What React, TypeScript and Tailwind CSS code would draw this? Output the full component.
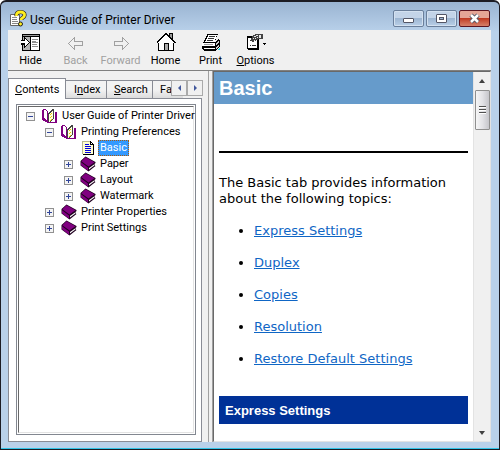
import type { ReactNode } from "react";

function HelpLogo() {
  return (
    <svg width="18" height="17" viewBox="0 0 18 17" aria-hidden="true">
      <path d="M1.500 4.500h9v11h-9z" fill="#fff" stroke="#666" />
      <path d="M3 7.500h5M3 9.500h5M3 11.500h6M3 13.500h6" stroke="#888" />
      <path d="M7.500 6C7 3 9 2 11.500 2s4.500 1 4 3.500-3.500 2.500-3.500 4.500" fill="none" stroke="#222" strokeWidth="4" />
      <path d="M7.500 6C7 3 9 2 11.500 2s4.500 1 4 3.500-3.500 2.500-3.500 4.500" fill="none" stroke="#ffee20" strokeWidth="2.800" />
      <circle cx="11.500" cy="14" r="2" fill="#ffee20" stroke="#222" />
    </svg>
  );
}

function HideIcon() {
  return (
    <svg width="21" height="20" viewBox="0 0 21 20" shapeRendering="crispEdges" aria-hidden="true">
      <path d="M2 1h18v18H2z" fill="#000" />
      <path d="M3 4h7v14H3z" fill="#b4b4b4" />
      <path d="M11 4h8v14h-8z" fill="#fff" />
      <path d="M3 2h16v1H3z" fill="#999" />
      <path d="M12 6.500h6M12 8.500h4M12 10.500h6M12 12.500h5M12 14.500h6" stroke="#888" />
      <path d="M0 7h4V4h1v1h1v1h1v1h1v1h1v1h1v2H9v1H8v1H7v1H6v1H5v1H4v-3H0z" fill="#000" />
      <path d="M1 8h4V6h1v1h1v1h1v1h1v2H8v1H7v1H6v1H5v-3H1z" fill="#fff" />
    </svg>
  );
}

function ArrowIcon({ flip }: { flip?: boolean }) {
  return (
    <svg width="20" height="20" viewBox="0 0 20 20" className={flip ? "-scale-x-100" : ""} shapeRendering="crispEdges" aria-hidden="true">
      <path
        fill="#a0a0a0"
        d="M8 4h1v4h8v6H9v4H8v-1H7v-1H6v-1H5v-1H4v-1H3v-1H2v-2h1V9h1V8h1V7h1V6h1V5h1z"
      />
      <path
        fill="#f0f0f0"
        d="M7 6h1v3h8v4H8v3H7v-1H6v-1H5v-1H4v-1H3v-2h1V9h1V8h1V7h1z"
      />
    </svg>
  );
}

function HomeIcon() {
  return (
    <svg width="20" height="20" viewBox="0 0 20 20" shapeRendering="crispEdges" aria-hidden="true">
      <path d="M13 0h4v8h-4z" fill="#000" />
      <path d="M14 1h2v7h-2z" fill="#999" />
      <path
        fill="#000"
        d="M9 0h2v1h1v1h1v1h1v1h1v1h1v1h1v1h1v1h1v1h1v2h-2v8H2v-8H0V9h1V8h1V7h1V6h1V5h1V4h1V3h1V2h1V1h1z"
      />
      <path
        fill="#fff"
        d="M9 2h2v1h1v1h1v1h1v1h1v1h1v1h1v1h1v1h-1v8H3v-8H2V9h1V8h1V7h1V6h1V5h1V4h1V3h1z"
      />
      <path d="M8 11h5v7H8z" fill="#000" />
      <path d="M9 12h3v6H9z" fill="#aaa" />
    </svg>
  );
}

function PrintIcon() {
  return (
    <svg width="22" height="20" viewBox="0 0 22 20" shapeRendering="crispEdges" aria-hidden="true">
      <path d="M7 1h11v1h-1v2h-1v3h-1v3H3V9h1V7h1V5h1V3h1z" fill="#000" />
      <path d="M8 2h9v1h-1v3h-1v3H5V8h1V6h1V4h1z" fill="#fff" />
      <path d="M9 3h6v1H9zM8 5h6v1H8zM7 7h6v1H7z" fill="#333" />
      <path d="M1 10h2V9h13V8h1V7h1V6h1v1h1v8h-1v1h-1v1h-1v1h-1v1H4v-1H3v-1H1z" fill="#000" />
      <path d="M3 10h12v1H3zM2 11h13v3H2zM4 16h11v1H4z" fill="#fff" />
      <path d="M4 12h9v1H4z" fill="#999" />
      <path d="M17 9h1V8h1v3h-1v1h-1v1h-1v-3h1zM16 15h1v-1h1v-1h1v2h-1v1h-1v1h-1z" fill="#ccc" />
      <path d="M18 17h2v1h-2zM19 16h1v1h-1z" fill="#20cfd8" />
    </svg>
  );
}

function OptionsIcon() {
  return (
    <svg width="24" height="20" viewBox="0 0 24 20" shapeRendering="crispEdges" aria-hidden="true">
      <path d="M2 3h13v15H4v-1H2z" fill="#000" />
      <path d="M4 5h9v11H4z" fill="#fff" />
      <path d="M6 7h1v1H6zM8 7h4v1H8zM6 10h1v1H6zM8 10h4v1H8zM6 13h1v1H6zM8 13h4v1H8z" fill="#333" />
      <path d="M8 3h1V2h2V1h8v5h-5v1h-2v1h-2v1H8V8H7V5h1z" fill="#444" />
      <path d="M10 3h2v1h-2zM12 2h2v1h-2zM9 5h1v1H9zM11 5h1v1h-1zM13 4h1v1h-1zM15 2h2v3h-2zM10 7h1v1h-1z" fill="#e8e8e8" />
      <path d="M18 10h5v1h-1v1h-1v1h-1v-1h-1v-1h-1z" fill="#000" />
    </svg>
  );
}

function OpenBook() {
  return (
    <svg width="16" height="16" viewBox="0 0 16 16" shapeRendering="crispEdges" aria-hidden="true">
      <path d="M0 2h1v9l5 3h7V4h2v11H6l-6-3z" fill="#800080" />
      <path d="M1 1h2l3 3v10l-5-3z" fill="#800080" />
      <path d="M2 2h1l2 2v8l-3-2z" fill="#fff" />
      <path d="M6 5l4-4h2v10l-4 3H6z" fill="#444" />
      <path d="M7 6l4-4v9l-4 3z" fill="#ffffe0" />
      <path d="M8 6h1v1H8zM9 5h1v1H9zM8 9h1v1H8zM9 8h1v1H9zM8 12h1v1H8zM9 11h1v1H9z" fill="#e4cc00" />
      <path d="M12 3h1v9l-4 2V13l3-2z" fill="#fff" />
    </svg>
  );
}

function ClosedBook() {
  return (
    <svg width="16" height="16" viewBox="0 0 16 16" aria-hidden="true">
      <path d="M5.500 .5L15.500 6v1l-1 1v1.500l1 .5-7 5.500L.5 9.500V5z" fill="#200020" />
      <path d="M5.500 1.200L14.500 6.300 8.500 10.500 1.300 5.200z" fill="#800080" />
      <path d="M1 6.200l7 5.300v3.200L1 9.200z" fill="#800080" />
      <path d="M9 12l5-3.500v1.300l-5 3.700z" fill="#fff" />
    </svg>
  );
}

function PageIcon() {
  return (
    <svg width="16" height="16" viewBox="0 0 16 16" shapeRendering="crispEdges" aria-hidden="true">
      <path d="M3 1h8v1h1v1h1v1h1v11H3z" fill="#000" />
      <path d="M2 1h8v4h3v9H2z" fill="#b8b890" />
      <path d="M3 2h7v3h3v9H3z" fill="#ffffd0" />
      <path d="M11 3h1v1h-1z" fill="#fff" />
      <path d="M5 4h4v1H5zM5 6h6v1H5zM5 8h6v1H5zM5 10h6v1H5zM5 12h6v1H5z" fill="#0000e0" />
    </svg>
  );
}

function Expander({ open, label }: { open?: boolean; label: string }) {
  return (
    <button aria-label={(open ? "Collapse " : "Expand ") + label} className="size-[9px] shrink-0 border border-[#919191] bg-[#f4f4f4]">
      <svg width="7" height="7" viewBox="0 0 7 7" shapeRendering="crispEdges" className="block" aria-hidden="true">
        <path d={open ? "M1 3h5v1H1z" : "M1 3h5v1H1zM3 1h1v5H3z"} fill="#31469a" />
      </svg>
    </button>
  );
}

type Node = { text: string; level: 0 | 1 | 2; kind: "open" | "closed" | "page" };

const nodes: Node[] = [
  { text: "User Guide of Printer Driver", level: 0, kind: "open" },
  { text: "Printing Preferences", level: 1, kind: "open" },
  { text: "Basic", level: 2, kind: "page" },
  { text: "Paper", level: 2, kind: "closed" },
  { text: "Layout", level: 2, kind: "closed" },
  { text: "Watermark", level: 2, kind: "closed" },
  { text: "Printer Properties", level: 1, kind: "closed" },
  { text: "Print Settings", level: 1, kind: "closed" },
];

const indents = ["pl-[7px]", "pl-[26px]", "pl-[45px]"];

function TreeRow({ node }: { node: Node }) {
  const selected = node.kind === "page";
  return (
    <li role="treeitem" aria-selected={selected} className={"flex h-4 items-center whitespace-nowrap " + indents[node.level]}>
      {selected ? <span className="w-[9px] shrink-0" /> : <Expander open={node.kind === "open"} label={node.text} />}
      <span className="ml-[7px] mr-0.5 shrink-0">
        {node.kind === "open" ? <OpenBook /> : node.kind === "closed" ? <ClosedBook /> : <PageIcon />}
      </span>
      <span className={selected ? "h-4 bg-[#3399ff] px-0.5 leading-4 text-white outline-1 -outline-offset-1 outline-dotted outline-[#a65a10]" : "pl-0.5 leading-4"}>
        {node.text}
      </span>
    </li>
  );
}

function Tool({ icon, children, disabled }: { icon: ReactNode; children: ReactNode; disabled?: boolean }) {
  return (
    <button disabled={disabled} className="flex w-[45px] flex-col items-center pt-[3px] disabled:text-[#a0a0a0]">
      {icon}
      <span className="leading-[18px]">{children}</span>
    </button>
  );
}

function Caption({ label, danger, children }: { label: string; danger?: boolean; children: ReactNode }) {
  return (
    <button
      aria-label={label}
      className={
        "flex h-[17px] w-[31px] items-center justify-center rounded-[2px] border bg-linear-to-b " +
        (danger
          ? "border-[#5b1420] from-[#e5a596] from-45% via-[#c03a22] via-50% to-[#d5806a]"
          : "border-[#6a7f9b] from-[#c3d4e8] from-45% via-[#9db6d2] via-50% to-[#b9d0e8] shadow-[inset_0_0_0_1px_#d3e1f0]")
      }
    >
      {children}
    </button>
  );
}

const topics = ["Express Settings", "Duplex", "Copies", "Resolution", "Restore Default Settings"];

const tab = "border border-b-0 border-[#898c95] bg-linear-to-b from-[#f3f3f3] from-50% to-[#dcdcdc] h-[18px] text-left leading-[18px]";

export default function App() {
  return (
    <div className="flex h-screen flex-col overflow-hidden rounded-t-md border border-t-2 border-[#1c1c24] bg-linear-to-b from-[#9ab4d2] to-[#b9d1ea] to-[30px] font-['Roboto','Liberation_Sans',sans-serif] text-[11px] text-black">
      <header className="flex h-7 shrink-0 items-start pl-2 pr-[9px] pt-2">
        <HelpLogo />
        <h1 className="ml-[3px] flex-1 text-[12px] leading-5">User Guide of Printer Driver</h1>
        <div className="flex gap-0.5">
          <Caption label="Minimize">
            <span className="mt-1 h-[5px] w-[11px] rounded-[1px] border border-[#535666] bg-white" />
          </Caption>
          <Caption label="Maximize">
            <span className="flex h-[9px] w-[11px] items-center justify-center rounded-[1px] border border-[#535666] bg-white">
              <span className="h-[3px] w-[5px] border border-[#535666] bg-[#9db6d2]" />
            </span>
          </Caption>
          <Caption label="Close" danger>
            <svg width="13" height="11" viewBox="0 0 13 11" aria-hidden="true">
              <path d="M3 2l7 7M10 2l-7 7" stroke="#535666" strokeWidth="4.500" />
              <path d="M3 2l7 7M10 2l-7 7" stroke="#fff" strokeWidth="2.500" />
            </svg>
          </Caption>
        </div>
      </header>

      <div className="flex min-h-0 flex-1 flex-col border-b border-[#30c4e8] pb-1.5 pl-[7px] pr-2">
        <nav aria-label="Toolbar" className="flex h-10 shrink-0 bg-[#f0f0f0]">
          <Tool icon={<HideIcon />}>Hide</Tool>
          <Tool icon={<ArrowIcon />} disabled>Back</Tool>
          <Tool icon={<ArrowIcon flip />} disabled>Forward</Tool>
          <Tool icon={<HomeIcon />}>Home</Tool>
          <Tool icon={<PrintIcon />}>Print</Tool>
          <Tool icon={<OptionsIcon />}><u>O</u>ptions</Tool>
        </nav>

        <div className="flex min-h-0 flex-1 border-t border-[#808080] bg-[#f0f0f0]">
          <aside className="flex w-[194px] shrink-0 flex-col pt-[7px]">
            <div role="tablist" className="relative z-10 flex h-5 items-end">
              <button role="tab" aria-selected="true" className="-mb-px h-[21px] w-[58px] border border-b-0 border-[#898c95] bg-white pl-1.5 text-left leading-[17px]"><u>C</u>ontents</button>
              <button role="tab" aria-selected="false" className={tab + " w-[41px] border-l-0 pl-2"}>I<u>n</u>dex</button>
              <button role="tab" aria-selected="false" className={tab + " w-[46px] border-l-0 pl-[7px]"}><u>S</u>earch</button>
              <button role="tab" aria-selected="false" aria-label="Favorites" className={tab + " w-[30px] border-x-0 pl-[7px]"}>Fa</button>
              <div className="absolute -right-px top-0.5 flex">
                <button aria-label="Scroll tabs left" className="flex size-4 items-center justify-center border border-[#aaa] bg-[#f0f0f0]">
                  <span className="border-y-[3px] border-r-[3px] border-y-transparent border-r-[#42589c]" />
                </button>
                <button aria-label="Scroll tabs right" className="flex size-4 items-center justify-center border border-[#aaa] bg-[#f0f0f0]">
                  <span className="border-y-[3px] border-l-[3px] border-y-transparent border-l-[#42589c]" />
                </button>
              </div>
            </div>
            <div className="flex min-h-0 flex-1 border border-[#898c95] bg-white pb-1.5 pl-[7px] pr-[5px] pt-[5px]">
              <div className="flex min-w-0 flex-1 border border-[#828790] p-px">
                <ul role="tree" className="min-w-0 flex-1 border border-[#e3e3e3] border-l-[#696969] border-t-[#696969] pt-px">
                  {nodes.map((node) => (
                    <TreeRow key={node.text} node={node} />
                  ))}
                </ul>
              </div>
            </div>
          </aside>

          <div className="ml-1.5 w-[5px] shrink-0 border-x border-[#a0a0a0]" />

          <main className="flex min-w-0 flex-1 border border-[#e3e3e3] border-l-[#696969] border-t-[#696969] bg-white">
            <article className="min-w-0 flex-1 overflow-hidden font-['DejaVu_Sans',sans-serif] text-[13px] leading-4">
              <h2 className="h-8 bg-[#669bcb] pl-[5px] font-['Liberation_Sans',sans-serif] text-[20px] font-bold leading-8 text-white">Basic</h2>
              <div className="px-[5px]">
                <hr className="mt-[47px] border-t-2 border-black" />
                <p className="mt-[22px]">The Basic tab provides information about the following topics:</p>
                <ul className="mt-4 flex list-disc flex-col gap-4 pl-[35px]">
                  {topics.map((topic) => (
                    <li key={topic}>
                      <a href="#topic" className="text-[#0f66c5] underline">{topic}</a>
                    </li>
                  ))}
                </ul>
                <h3 className="mt-[29px] h-7 bg-[#003197] pl-1.5 font-['Liberation_Sans',sans-serif] font-bold leading-[29px] text-white">Express Settings</h3>
              </div>
            </article>
            <div className="flex w-[17px] shrink-0 flex-col items-center border-l border-[#e3e3e3] bg-[#f0f0f0]">
              <button aria-label="Scroll up" className="flex h-[18px] w-full items-center justify-center">
                <span className="border-x-[3px] border-b-[4px] border-x-transparent border-b-[#404040]" />
              </button>
              <div className="flex h-10 w-[15px] flex-col items-center justify-center gap-px rounded-[1px] border border-[#8f8f8f] bg-linear-to-r from-[#f6f6f6] via-[#e2e2e6] to-[#c6c6cb]">
                <span className="h-0.5 w-[7px] border-b border-white bg-[#505050]" />
                <span className="h-0.5 w-[7px] border-b border-white bg-[#505050]" />
                <span className="h-0.5 w-[7px] border-b border-white bg-[#505050]" />
              </div>
              <button aria-label="Scroll down" className="mt-auto flex h-[17px] w-full items-center justify-center">
                <span className="border-x-[3px] border-t-[4px] border-x-transparent border-t-[#404040]" />
              </button>
            </div>
          </main>
        </div>
      </div>
    </div>
  );
}
